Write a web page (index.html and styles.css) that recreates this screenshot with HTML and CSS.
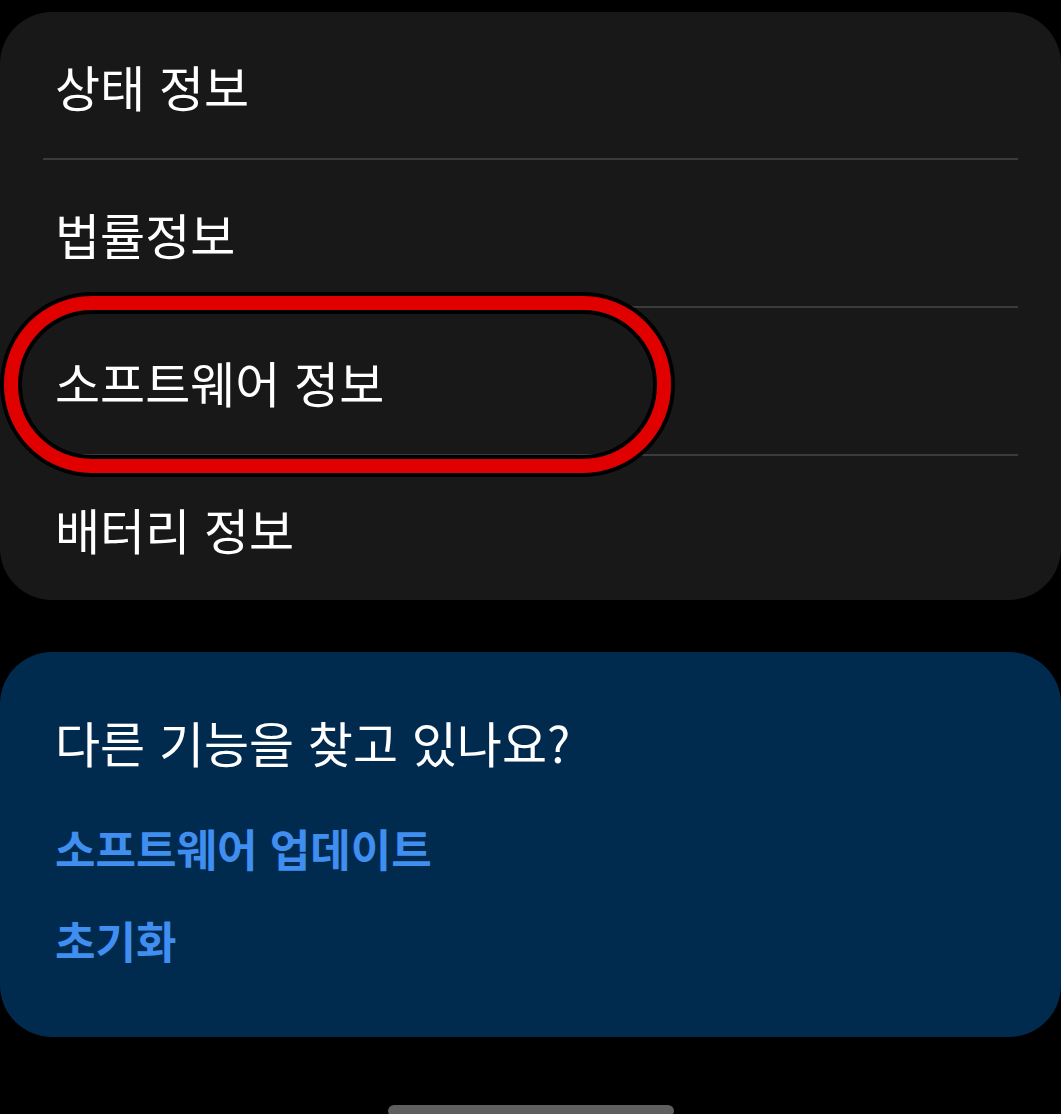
FILE: index.html
```html
<!DOCTYPE html>
<html lang="ko">
<head>
  <meta charset="UTF-8">
  <meta name="viewport" content="width=device-width, initial-scale=1.0">
  <title>휴대전화 정보</title>
  <link rel="stylesheet" href="styles.css">
</head>
<body>

  <!-- Info list -->
  <div class="card list">
    <div class="row">상태 정보</div>
    <div class="divider"></div>
    <div class="row">법률정보</div>
    <div class="divider"></div>
    <div class="row highlight">
      소프트웨어 정보
      <span class="circle"></span>
    </div>
    <div class="divider"></div>
    <div class="row last">배터리 정보</div>
  </div>

  <!-- Suggestions -->
  <div class="card suggest">
    <h2>다른 기능을 찾고 있나요?</h2>
    <a href="#">소프트웨어 업데이트</a>
    <a href="#">초기화</a>
  </div>

  <!-- Navigation handle -->
  <div class="nav-bar">
    <div class="handle"></div>
  </div>

</body>
</html>
```

FILE: styles.css
```css
body {
  margin: 0;
  padding-top: 12px;
  background: #000000;
  color: #ffffff;
  font-family: "Noto Sans CJK KR", "Noto Sans", sans-serif;
  overflow: hidden;
}

.card {
  border-radius: 52px;
}

.list {
  background: #181818;
  height: 588px;
  display: flex;
  flex-direction: column;
}

.row {
  position: relative;
  height: 146px;
  display: flex;
  align-items: center;
  padding-left: 55px;
  font-size: 49px;
}

.row.last {
  height: 144px;
}

.divider {
  height: 2px;
  margin: 0 43px;
  background: #3b3b3b;
}

/* red marker drawn around the row */
.circle {
  position: absolute;
  left: 4px;
  top: -12px;
  width: 667px;
  height: 177px;
  box-sizing: border-box;
  border: 14px solid #e00000;
  border-radius: 88px;
  box-shadow: 0 0 0 4px #000000, inset 0 0 0 4px #000000;
}

.suggest {
  margin-top: 52px;
  height: 385px;
  box-sizing: border-box;
  background: #012a4f;
  padding: 60px 55px 0;
  display: flex;
  flex-direction: column;
  align-items: flex-start;
}

.suggest h2 {
  margin: 0 0 46px;
  height: 60px;
  line-height: 60px;
  font-size: 49px;
  font-weight: normal;
}

.suggest a {
  height: 60px;
  line-height: 60px;
  margin-bottom: 32px;
  font-size: 44px;
  font-weight: bold;
  color: #3f8ef0;
  text-decoration: none;
}

.nav-bar {
  display: flex;
  justify-content: center;
  padding-top: 68px;
}

.handle {
  width: 286px;
  height: 12px;
  border-radius: 6px;
  background: #5f5f5f;
}
```
